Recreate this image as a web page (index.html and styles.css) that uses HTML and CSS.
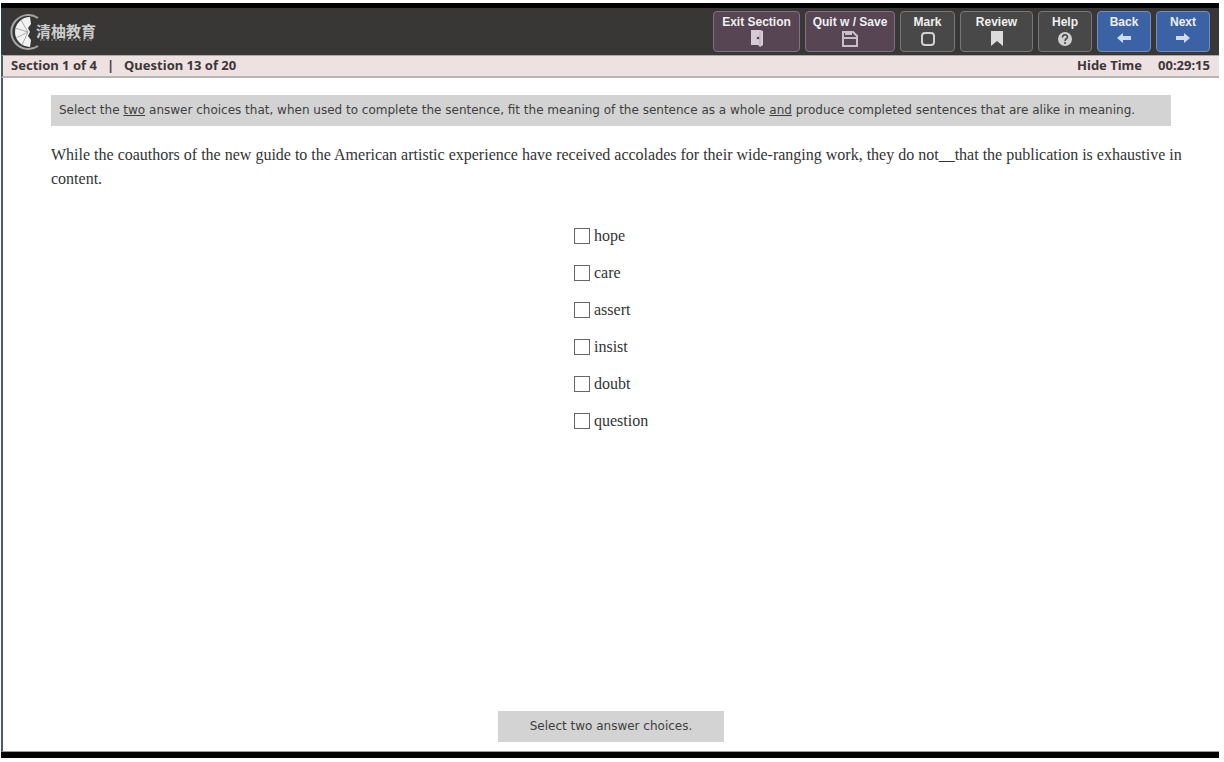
FILE: index.html
```html
<!DOCTYPE html>
<html lang="en">
<head>
    <meta charset="UTF-8">
    <meta name="viewport" content="width=device-width, initial-scale=1.0">
    <title>Verbal Reasoning - Question 13</title>
    <link rel="stylesheet" href="styles.css">
</head>
<body>
    <div class="screen">
        <header class="topbar">
            <div class="logo">
                <svg class="logo-mark" viewBox="0 0 34 38" aria-hidden="true">
                    <path d="M28 5A17 17 0 1 0 28 33" fill="none" stroke="#a5a5a5" stroke-width="2"/>
                    <path d="M20 4A15 15 0 0 0 20 34L21 27L18 23L20 19L18 15L21 11Z" fill="#f2f2f2"/>
                    <path d="M18 19L5 15M18 19L6 25M18 19L11 7M18 19L12 32" stroke="#aaa" stroke-width="1"/>
                </svg>
                <div class="logo-text">
                    <span class="logo-name" lang="zh">清柚教育</span>
                    <span class="logo-dots"></span>
                </div>
            </div>
            <nav class="buttons">
                <button type="button" class="btn purple exit">
                    Exit Section
                    <svg viewBox="0 0 18 18" aria-hidden="true">
                        <path d="M3 1H12L15 2V16L12 18L10 16H3Z" fill="#d5cbd3"/>
                        <path d="M12 3V17" stroke="#b9adb7" stroke-width="1"/>
                        <circle cx="10" cy="9" r="1.300" fill="#574553"/>
                    </svg>
                </button>
                <button type="button" class="btn purple quit">
                    Quit w / Save
                    <svg viewBox="0 0 18 18" aria-hidden="true">
                        <path d="M2 3H12L16 7V17H2Z" fill="none" stroke="#c9bdc7" stroke-width="2"/>
                        <path d="M2 9H16M4 5H11" fill="none" stroke="#c9bdc7" stroke-width="2"/>
                    </svg>
                </button>
                <button type="button" class="btn mark">
                    Mark
                    <svg viewBox="0 0 18 18" aria-hidden="true">
                        <rect x="3" y="4" width="12" height="12" rx="3" fill="none" stroke="#d0d0d0" stroke-width="2"/>
                    </svg>
                </button>
                <button type="button" class="btn review">
                    Review
                    <svg viewBox="0 0 18 18" aria-hidden="true">
                        <path d="M3 2H15V17L9 12L3 17Z" fill="#dcdcdc"/>
                    </svg>
                </button>
                <button type="button" class="btn help">
                    Help
                    <svg viewBox="0 0 18 18" aria-hidden="true">
                        <circle cx="9" cy="10" r="7" fill="#d0d0d0"/>
                        <path d="M6.500 8.500C6.500 5 11.500 5 11.500 8C11.500 10 9 9.500 9 12M9 13V15" fill="none" stroke="#484848" stroke-width="1.600"/>
                    </svg>
                </button>
                <button type="button" class="btn blue">
                    Back
                    <svg viewBox="0 0 18 18" aria-hidden="true">
                        <path d="M2 9L8 4V7H16V11H8V14Z" fill="#cfdcf0"/>
                    </svg>
                </button>
                <button type="button" class="btn blue">
                    Next
                    <svg viewBox="0 0 18 18" aria-hidden="true">
                        <path d="M16 9L10 4V7H2V11H10V14Z" fill="#cfdcf0"/>
                    </svg>
                </button>
            </nav>
        </header>

        <div class="status">
            <div class="progress">
                <span>Section 1 of 4</span>
                <span>|</span>
                <span>Question 13 of 20</span>
            </div>
            <div class="timer">
                <button type="button" class="hide-time">Hide Time</button>
                <span>00:29:15</span>
            </div>
        </div>

        <main class="content">
            <p class="directions">Select the <u>two</u> answer choices that, when used to complete the sentence, fit the meaning of the sentence as a whole <u>and</u> produce completed sentences that are alike in meaning.</p>
            <p class="question">While the coauthors of the new guide to the American artistic experience have received accolades for their wide-ranging work, they do not__that the publication is exhaustive in content.</p>
            <div class="choices">
                <label><input type="checkbox" name="answer" value="hope">hope</label>
                <label><input type="checkbox" name="answer" value="care">care</label>
                <label><input type="checkbox" name="answer" value="assert">assert</label>
                <label><input type="checkbox" name="answer" value="insist">insist</label>
                <label><input type="checkbox" name="answer" value="doubt">doubt</label>
                <label><input type="checkbox" name="answer" value="question">question</label>
            </div>
            <p class="hint">Select two answer choices.</p>
        </main>
    </div>
</body>
</html>
```
FILE: styles.css
```css
* {
    box-sizing: border-box;
}

body {
    margin: 0;
    padding: 3px 5px 4px 1px;
    height: 100vh;
    background-color: #fff;
}

.screen {
    display: flex;
    flex-direction: column;
    height: 100%;
    border-top: 5px solid #000;
    border-bottom: 6px solid #000;
}

/* Top bar */
.topbar {
    display: flex;
    justify-content: space-between;
    align-items: center;
    height: 47px;
    padding: 0 9px 0 7px;
    background-color: #383736;
    border-left: 2px solid #2b3a52;
}

.logo {
    display: flex;
    align-items: center;
}

.logo-mark {
    width: 34px;
    height: 38px;
}

.logo-text {
    display: flex;
    flex-direction: column;
    margin-left: -8px;
}

.logo-name {
    font: bold 15px/16px "Noto Sans CJK SC", sans-serif;
    color: #ccc;
}

.logo-dots {
    width: 52px;
    margin-left: 4px;
    border-top: 2px dotted #666;
}

.buttons {
    display: flex;
    gap: 5px;
}

.btn {
    display: flex;
    flex-direction: column;
    align-items: center;
    width: 54px;
    height: 41px;
    padding: 3px 0 0;
    border: 1px solid #777;
    border-radius: 4px;
    background-color: #484848;
    color: #f0f0f0;
    font: bold 12px/14px "Liberation Sans", Arial, sans-serif;
    white-space: nowrap;
    cursor: pointer;
}

.btn svg {
    width: 18px;
    height: 18px;
}

.exit {
    width: 87px;
}

.quit {
    width: 90px;
}

.mark {
    width: 55px;
}

.review {
    width: 73px;
}

.purple {
    background-color: #574553;
    border-color: #83717f;
}

.blue {
    background-color: #3a62a5;
    border-color: #6f8dbd;
}

/* Section and time */
.status {
    display: flex;
    justify-content: space-between;
    align-items: center;
    height: 23px;
    padding: 0 9px 2px 8px;
    background-color: #ede1e2;
    border-top: 1px solid #aaa;
    border-bottom: 2px solid #b9b4b4;
    border-left: 2px solid #4c5a6e;
    color: #3c3738;
    font: bold 13px/18px "Noto Sans", sans-serif;
}

.progress {
    display: flex;
    gap: 10px;
}

.timer {
    display: flex;
    gap: 16px;
}

.hide-time {
    padding: 0;
    border: none;
    background: none;
    color: inherit;
    font: inherit;
    cursor: pointer;
}

/* Question */
.content {
    display: flex;
    flex-direction: column;
    flex: 1;
    padding: 17px 48px 9px;
    border-left: 2px solid #4c5a6e;
    border-bottom: 1px solid #999;
}

.directions {
    margin: 0;
    padding: 7px 8px;
    background-color: #d3d3d3;
    color: #404040;
    font: 12px/17px "DejaVu Sans", Verdana, sans-serif;
}

.question {
    margin: 17px -16px 0 0;
    color: #333;
    font: 16px/24px "Liberation Serif", "Times New Roman", serif;
}

.choices {
    display: flex;
    flex-direction: column;
    gap: 13px;
    width: 74px;
    margin: 33px auto 0;
}

.choices label {
    display: flex;
    align-items: center;
    gap: 4px;
    color: #333;
    font: 16px/24px "Liberation Serif", "Times New Roman", serif;
}

.choices input {
    appearance: none;
    flex: none;
    width: 16px;
    height: 16px;
    margin: 0;
    border: 1px solid #666;
    background-color: #fff;
}

.choices input:checked {
    background-color: #666;
}

.hint {
    margin: auto auto 0;
    padding: 7px 32px;
    background-color: #d3d3d3;
    color: #404040;
    font: 12px/17px "DejaVu Sans", Verdana, sans-serif;
}
```
